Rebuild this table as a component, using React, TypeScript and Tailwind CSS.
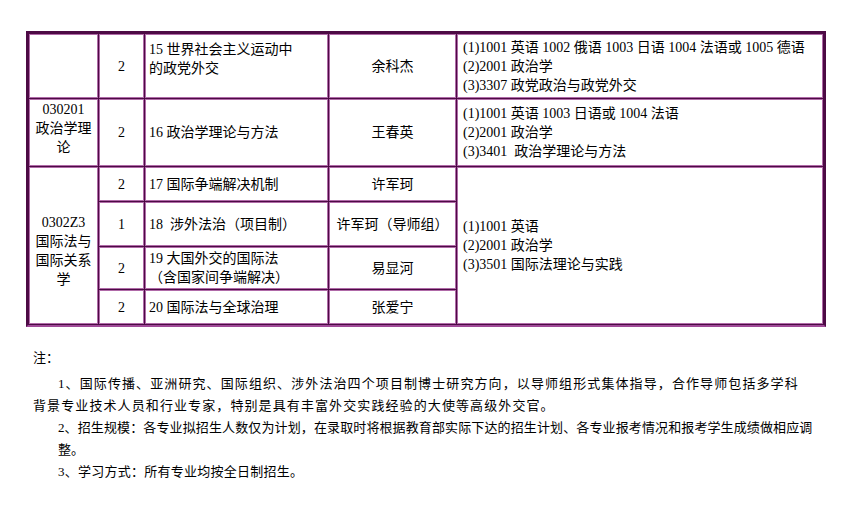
import React from 'react';

const cell = 'bg-white border border-[#b06aa8] p-0 align-middle';

export default function App() {
  return (
    <div className="w-[854px] h-[526px] bg-white text-black font-['Liberation_Serif','Noto_Sans_CJK_SC',serif] overflow-hidden">
      <div className="pt-[31px] pl-[26px]">
        <table className="w-[800px] table-fixed border-separate border-spacing-[1px] border-2 border-[#4d0a45] border-b-[#a04a98] bg-[#4d0a45] text-[14px] leading-[19px]">
          <colgroup>
            <col className="w-[69px]" />
            <col className="w-[45px]" />
            <col className="w-[183px]" />
            <col className="w-[127px]" />
            <col className="w-[366px]" />
          </colgroup>
          <tbody>
            {/* 15 */}
            <tr>
              <td className={`${cell} h-[64px]`}></td>
              <td className={`${cell} text-center`}>2</td>
              <td className={`${cell} pl-[3px] pb-[14px]`}>
                15 世界社会主义运动中
                <br />
                的政党外交
              </td>
              <td className={`${cell} text-center`}>余科杰</td>
              <td className={`${cell} pl-[5px]`}>
                (1)1001 英语 1002 俄语 1003 日语 1004 法语或 1005 德语
                <br />
                (2)2001 政治学
                <br />
                (3)3307 政党政治与政党外交
              </td>
            </tr>

            {/* 16 */}
            <tr>
              <td className={`${cell} h-[65px] text-center pb-[8px]`}>
                030201
                <br />
                政治学理
                <br />
                论
              </td>
              <td className={`${cell} text-center`}>2</td>
              <td className={`${cell} pl-[3px]`}>16 政治学理论与方法</td>
              <td className={`${cell} text-center`}>王春英</td>
              <td className={`${cell} pl-[5px]`}>
                (1)1001 英语 1003 日语或 1004 法语
                <br />
                (2)2001 政治学
                <br />
                (3)3401&nbsp; 政治学理论与方法
              </td>
            </tr>

            {/* 0302Z3 */}
            <tr>
              <td rowSpan={4} className={`${cell} text-center pt-[10px]`}>
                0302Z3
                <br />
                国际法与
                <br />
                国际关系
                <br />
                学
              </td>
              <td className={`${cell} h-[34px] text-center`}>2</td>
              <td className={`${cell} pl-[3px]`}>17 国际争端解决机制</td>
              <td className={`${cell} text-center`}>许军珂</td>
              <td rowSpan={4} className={`${cell} pl-[5px]`}>
                (1)1001 英语
                <br />
                (2)2001 政治学
                <br />
                (3)3501 国际法理论与实践
              </td>
            </tr>
            <tr>
              <td className={`${cell} h-[44px] text-center`}>1</td>
              <td className={`${cell} pl-[3px]`}>18&nbsp; 涉外法治（项目制）</td>
              <td className={`${cell} text-center whitespace-nowrap`}>许军珂（导师组）</td>
            </tr>
            <tr>
              <td className={`${cell} h-[42px] text-center`}>2</td>
              <td className={`${cell} pl-[3px]`}>
                19 大国外交的国际法
                <br />
                （含国家间争端解决）
              </td>
              <td className={`${cell} text-center`}>易显河</td>
            </tr>
            <tr>
              <td className={`${cell} h-[34px] text-center`}>2</td>
              <td className={`${cell} pl-[3px]`}>20 国际法与全球治理</td>
              <td className={`${cell} text-center`}>张爱宁</td>
            </tr>
          </tbody>
        </table>
      </div>

      {/* Notes */}
      <div className="ml-[33px] mt-[20px] text-[13px] leading-[22px] whitespace-nowrap">
        <p className="mb-[4px]">注：</p>
        <p className="indent-[25px] tracking-[1.1px]">
          1、国际传播、亚洲研究、国际组织、涉外法治四个项目制博士研究方向，以导师组形式集体指导，合作导师包括多学科
          <br />
          背景专业技术人员和行业专家，特别是具有丰富外交实践经验的大使等高级外交官。
        </p>
        <p className="pl-[25px] tracking-[0.12px]">
          2、招生规模：各专业拟招生人数仅为计划，在录取时将根据教育部实际下达的招生计划、各专业报考情况和报考学生成绩做相应调
          <br />
          整。
        </p>
        <p className="pl-[25px] tracking-[0.25px]">3、学习方式：所有专业均按全日制招生。</p>
      </div>
    </div>
  );
}
